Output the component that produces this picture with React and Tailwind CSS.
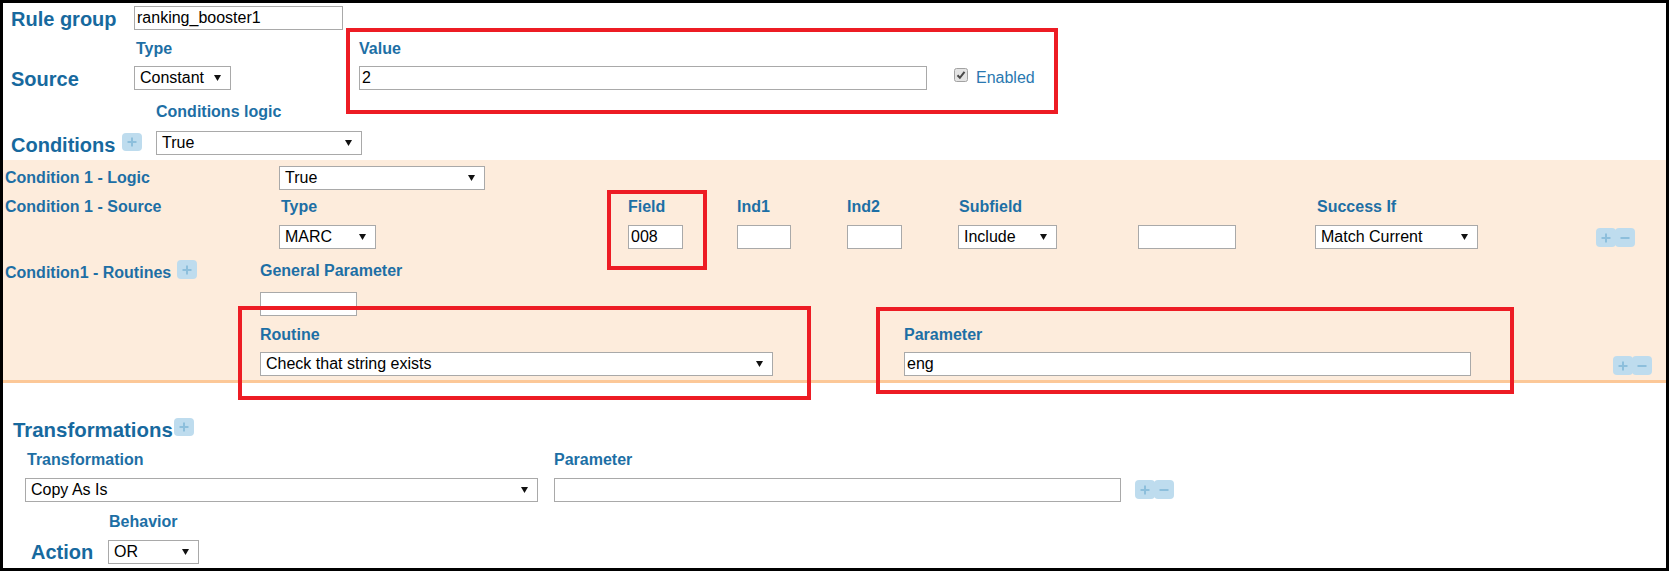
import React from 'react';

const label = 'text-[16px] leading-[18px] font-bold text-[#1d6fa5] whitespace-nowrap';
const heading = 'text-[20px] font-bold text-[#17699e] whitespace-nowrap';

const Arrow = () => (
    <svg width="7" height="6" viewBox="0 0 7 6" className="shrink-0">
        <polygon points="0,0 7,0 3.5,6" fill="#111" />
    </svg>
);

const Select = ({ value, className = '' }) => (
    <div className={`flex h-[24px] items-center justify-between border border-[#a9a9a9] bg-white pl-[5px] pr-[9px] text-[16px] text-black ${className}`}>
        <span className="whitespace-nowrap">{value}</span>
        <Arrow />
    </div>
);

const Input = ({ value = '', className = '' }) => (
    <input
        readOnly
        value={value}
        className={`block h-[24px] border border-[#a9a9a9] bg-white px-[2px] text-[16px] text-black outline-none ${className}`}
    />
);

const Plus = () => (
    <svg width="10" height="10" viewBox="0 0 10 10">
        <path d="M5 0.5v9M0.5 5h9" stroke="#8dbfdc" strokeWidth="2" />
    </svg>
);

const Minus = () => (
    <svg width="10" height="10" viewBox="0 0 10 10">
        <path d="M0.5 5h9" stroke="#8dbfdc" strokeWidth="2" />
    </svg>
);

const AddBtn = ({ className = '' }) => (
    <span className={`flex h-[18px] w-[20px] shrink-0 items-center justify-center rounded-[4px] bg-[#bedcee] ${className}`}>
        <Plus />
    </span>
);

const AddRemove = ({ className = '' }) => (
    <div className={`flex shrink-0 ${className}`}>
        <span className="flex h-[19px] w-[20px] items-center justify-center rounded-[4px] bg-[#bedcee]">
            <Plus />
        </span>
        <span className="-ml-[1px] flex h-[19px] w-[20px] items-center justify-center rounded-[4px] bg-[#bedcee]">
            <Minus />
        </span>
    </div>
);

// red annotation frames drawn over the form
const Mark = ({ className = '' }) => (
    <div className={`pointer-events-none absolute border-4 border-[#ed1c24] ${className}`} />
);

const Checkbox = () => (
    <svg width="14" height="14" viewBox="0 0 14 14" className="mt-[2px] shrink-0">
        <rect x="0.5" y="0.5" width="13" height="13" rx="2" fill="#e4e4e4" stroke="#a2a2a2" />
        <path d="M3.5 7.2l2.4 2.6 4.6-6" fill="none" stroke="#4a4a4a" strokeWidth="2" />
    </svg>
);

export default function App() {
    return (
        <div className="h-[571px] w-[1669px] overflow-hidden border-[3px] border-black bg-white font-['Liberation_Sans',Arial,sans-serif] text-black">
            {/* rule group */}
            <div className="flex items-start pl-[8px] pt-[3px]">
                <div className={`${heading} w-[123px] pt-[2px] leading-[22px]`}>Rule group</div>
                <Input value="ranking_booster1" className="w-[209px]" />
            </div>

            {/* source */}
            <div className="mt-[10px] flex items-end pl-[8px]">
                <div className={`${heading} w-[123px] leading-[21px]`}>Source</div>
                <div className="flex w-[225px] flex-col">
                    <div className={`${label} pl-[2px]`}>Type</div>
                    <Select value="Constant" className="mt-[8px] w-[97px]" />
                </div>
                <div className="relative flex items-end">
                    <Mark className="-left-[13px] -top-[12px] h-[86px] w-[712px]" />
                    <div className="flex flex-col">
                        <div className={label}>Value</div>
                        <Input value="2" className="mt-[8px] w-[568px]" />
                    </div>
                    <div className="ml-[27px] flex h-[24px] items-start">
                        <Checkbox />
                        <span className="ml-[8px] text-[16px] leading-[24px] text-[#2a78b0]">Enabled</span>
                    </div>
                </div>
            </div>

            {/* conditions */}
            <div className="mt-[13px] flex items-end pl-[8px]">
                <div className="flex w-[145px] items-end">
                    <div className={`${heading} leading-[19px]`}>Conditions</div>
                    <AddBtn className="mb-[4px] ml-[7px]" />
                </div>
                <div className="flex flex-col">
                    <div className={label}>Conditions logic</div>
                    <Select value="True" className="mt-[10px] w-[206px]" />
                </div>
            </div>

            <div className="mt-[5px] border-b-[3px] border-[#fcc898] bg-[#fdecdc] pb-[4px] pl-[2px] pt-[6px]">
                <div className="flex items-center">
                    <div className={`${label} w-[274px]`}>Condition 1 - Logic</div>
                    <Select value="True" className="h-[23px] w-[206px]" />
                </div>

                <div className="mt-[8px] flex items-start">
                    <div className={`${label} w-[274px]`}>Condition 1 - Source</div>
                    <div className="flex w-[349px] flex-col">
                        <div className={`${label} pl-[2px]`}>Type</div>
                        <Select value="MARC" className="mt-[9px] w-[97px]" />
                    </div>
                    <div className="relative flex w-[109px] flex-col">
                        <Mark className="-left-[21px] -top-[8px] h-[80px] w-[100px]" />
                        <div className={label}>Field</div>
                        <Input value="008" className="mt-[9px] w-[55px]" />
                    </div>
                    <div className="flex w-[110px] flex-col">
                        <div className={label}>Ind1</div>
                        <Input className="mt-[9px] w-[54px]" />
                    </div>
                    <div className="flex w-[111px] flex-col">
                        <div className={label}>Ind2</div>
                        <Input className="mt-[9px] w-[55px]" />
                    </div>
                    <div className="flex w-[180px] flex-col">
                        <div className={`${label} pl-[1px]`}>Subfield</div>
                        <Select value="Include" className="mt-[9px] w-[99px]" />
                    </div>
                    <div className="flex w-[177px] flex-col pt-[27px]">
                        <Input className="w-[98px]" />
                    </div>
                    <div className="flex w-[281px] flex-col">
                        <div className={`${label} pl-[2px]`}>Success If</div>
                        <Select value="Match Current" className="mt-[9px] w-[163px]" />
                    </div>
                    <AddRemove className="mt-[30px]" />
                </div>

                <div className="mt-[13px] flex items-start">
                    <div className="flex w-[255px] items-start">
                        <div className={`${label} mt-[2px]`}>Condition1 - Routines</div>
                        <AddBtn className="-mt-[2px] ml-[6px] h-[19px]" />
                    </div>
                    <div className="flex flex-col">
                        <div className={label}>General Parameter</div>
                        <Input className="mt-[12px] w-[97px]" />
                    </div>
                </div>

                <div className="mt-[10px] flex items-start pl-[255px]">
                    <div className="relative flex w-[644px] flex-col">
                        <Mark className="-left-[22px] -top-[20px] h-[94px] w-[573px]" />
                        <div className={label}>Routine</div>
                        <Select value="Check that string exists" className="mt-[8px] w-[513px]" />
                    </div>
                    <div className="relative flex flex-col">
                        <Mark className="-left-[28px] -top-[19px] h-[87px] w-[638px]" />
                        <div className={label}>Parameter</div>
                        <Input value="eng" className="mt-[8px] w-[567px]" />
                    </div>
                    <AddRemove className="ml-[142px] mt-[30px]" />
                </div>
            </div>

            {/* transformations */}
            <div className="mt-[35px] flex items-start pl-[10px]">
                <div className="whitespace-nowrap text-[20.4px] font-bold leading-[24px] text-[#17699e]">Transformations</div>
                <AddBtn className="ml-[1px] w-[19px]" />
            </div>
            <div className="mt-[9px] flex items-start pl-[22px]">
                <div className="flex w-[529px] flex-col">
                    <div className={`${label} pl-[2px]`}>Transformation</div>
                    <Select value="Copy As Is" className="mt-[9px] w-[513px]" />
                </div>
                <div className="flex flex-col">
                    <div className={label}>Parameter</div>
                    <Input className="mt-[9px] w-[567px]" />
                </div>
                <AddRemove className="ml-[14px] mt-[29px]" />
            </div>

            {/* action */}
            <div className="mt-[11px] flex items-end pl-[28px]">
                <div className={`${heading} w-[77px] leading-[23px]`}>Action</div>
                <div className="flex flex-col">
                    <div className={`${label} pl-[1px]`}>Behavior</div>
                    <Select value="OR" className="mt-[9px] w-[91px]" />
                </div>
            </div>
        </div>
    );
}
